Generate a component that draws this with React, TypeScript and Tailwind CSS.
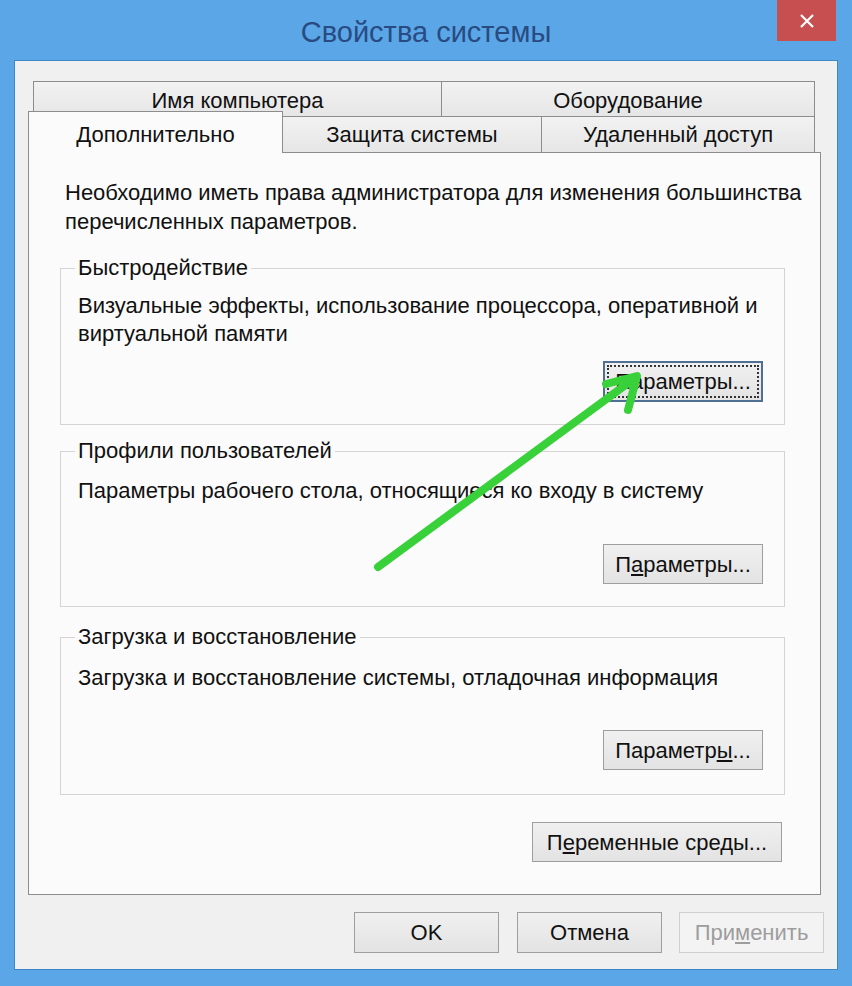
import React from 'react';

const font = { fontFamily: '"Liberation Sans", Arial, sans-serif' };

function Btn({
  children,
  className = '',
  focused = false,
  disabled = false,
}: {
  children: React.ReactNode;
  className?: string;
  focused?: boolean;
  disabled?: boolean;
}) {
  if (disabled) {
    return (
      <div
        className={
          'flex items-center justify-center border border-[#cfcfcf] bg-[#f3f3f3] text-[22px] text-[#9d9d9d] ' +
          className
        }
      >
        {children}
      </div>
    );
  }
  return (
    <div
      className={
        'flex items-center justify-center bg-gradient-to-b from-[#f0f0f0] to-[#e3e3e3] text-[22px] text-[#111] ' +
        (focused ? 'border-2 border-[#4f6f93] p-[2px] ' : 'border border-[#9e9e9e] ') +
        className
      }
    >
      {focused ? (
        <div className="flex h-full w-full items-center justify-center border-2 border-dotted border-[#333]">
          {children}
        </div>
      ) : (
        children
      )}
    </div>
  );
}

function Group({
  title,
  children,
  className = '',
}: {
  title: string;
  children: React.ReactNode;
  className?: string;
}) {
  return (
    <fieldset className={'ml-[31px] mr-[35px] border border-[#d4d4d4] px-[17px] ' + className}>
      <legend className="ml-[-3px] px-[3px] text-[22px] leading-[24px] text-[#111]">
        {title}
      </legend>
      {children}
    </fieldset>
  );
}

export default function App() {
  return (
    <div
      className="relative flex h-[986px] w-[852px] flex-col overflow-hidden bg-[#5ba6e7]"
      style={font}
    >
      {/* Title bar */}
      <div className="grid h-[61px] grid-cols-[1fr_auto_1fr] items-start">
        <div />
        <div className="pt-[13px] text-[29px] leading-[38px] text-[#284b82]">
          Свойства системы
        </div>
        <div className="flex justify-end pr-[16px]">
          <div className="flex h-[41px] w-[59px] items-center justify-center bg-[#c84f4f]">
            <svg width="18" height="18" viewBox="0 0 18 18">
              <path d="M3 3L15 15M15 3L3 15" stroke="#fff" strokeWidth="2.2" />
            </svg>
          </div>
        </div>
      </div>

      {/* Client area */}
      <div className="mx-[14px] mb-[16px] flex flex-1 flex-col border border-[#3f86c9] bg-[#f0f0f0] px-[13px] pt-[20px] pb-[16px]">
        {/* Tabs row 1 */}
        <div className="flex h-[35px] pl-[5px] text-[22px] text-[#111]">
          <div className="flex w-[409px] items-center justify-center border border-b-0 border-[#8d8d8d] bg-gradient-to-b from-[#f2f2f2] to-[#e6e6e6] pt-[2px]">
            Имя компьютера
          </div>
          <div className="flex w-[373px] items-center justify-center border border-b-0 border-l-0 border-[#8d8d8d] bg-gradient-to-b from-[#f2f2f2] to-[#e6e6e6] pt-[2px]">
            Оборудование
          </div>
        </div>
        {/* Tabs row 2 */}
        <div className="relative z-10 mt-[-5px] flex h-[41px] items-end text-[22px] text-[#111]">
          <div className="mb-[-1px] flex h-[42px] w-[255px] items-start justify-center border border-b-0 border-[#8d8d8d] bg-[#fbfbfb] pt-[6px]">
            Дополнительно
          </div>
          <div className="flex h-[36px] w-[259px] items-center justify-center border border-l-0 border-b-0 border-[#8d8d8d] bg-gradient-to-b from-[#f2f2f2] to-[#e6e6e6]">
            Защита системы
          </div>
          <div className="flex h-[36px] w-[273px] items-center justify-center border border-l-0 border-b-0 border-[#8d8d8d] bg-gradient-to-b from-[#f2f2f2] to-[#e6e6e6]">
            Удаленный доступ
          </div>
        </div>

        {/* Tab panel */}
        <div className="flex h-[743px] w-[793px] flex-col border border-[#8d8d8d] bg-[#fbfbfb] text-[22px] text-[#111]">
          <div className="mt-[25px] pl-[36px] leading-[29px]">
            Необходимо иметь права администратора для изменения большинства
            <br />
            перечисленных параметров.
          </div>

          <Group title="Быстродействие" className="mt-[20px] pb-[22px]">
            <div className="mt-[12px] leading-[28px]">
              Визуальные эффекты, использование процессора, оперативной и
              <br />
              виртуальной памяти
            </div>
            <div className="mt-[13px] flex justify-end pr-[4px]">
              <Btn focused className="h-[41px] w-[160px]">
                Параметры...
              </Btn>
            </div>
          </Group>

          <Group title="Профили пользователей" className="mt-[14px] pb-[22px]">
            <div className="mt-[14px] leading-[28px]">
              Параметры рабочего стола, относящиеся ко входу в систему
            </div>
            <div className="mt-[39px] flex justify-end pr-[4px]">
              <Btn className="h-[40px] w-[160px]">
                П<span className="underline">а</span>раметры...
              </Btn>
            </div>
          </Group>

          <Group title="Загрузка и восстановление" className="mt-[18px] pb-[24px]">
            <div className="mt-[15px] leading-[28px]">
              Загрузка и восстановление системы, отладочная информация
            </div>
            <div className="mt-[38px] flex justify-end pr-[4px]">
              <Btn className="h-[40px] w-[160px]">
                Параметр<span className="underline">ы</span>...
              </Btn>
            </div>
          </Group>

          <div className="mt-[27px] flex justify-end pr-[38px]">
            <Btn className="h-[40px] w-[250px]">
              П<span className="underline">е</span>ременные среды...
            </Btn>
          </div>
        </div>

        {/* Dialog buttons */}
        <div className="mt-[17px] flex justify-end gap-[18px] pr-0">
          <Btn className="h-[41px] w-[145px]">OK</Btn>
          <Btn className="h-[41px] w-[145px]">Отмена</Btn>
          <Btn disabled className="ml-[-1px] h-[41px] w-[145px]">
            При<span className="underline">м</span>енить
          </Btn>
        </div>
      </div>

      {/* Green arrow overlay */}
      <svg
        className="pointer-events-none absolute inset-0"
        width="852"
        height="986"
        viewBox="0 0 852 986"
      >
        <g
          stroke="#38d13a"
          strokeWidth="8"
          strokeLinecap="round"
          strokeLinejoin="round"
          fill="none"
        >
          <path d="M378 567L635 378" />
          <path d="M606 384L637 376L628 410" />
        </g>
      </svg>
    </div>
  );
}
